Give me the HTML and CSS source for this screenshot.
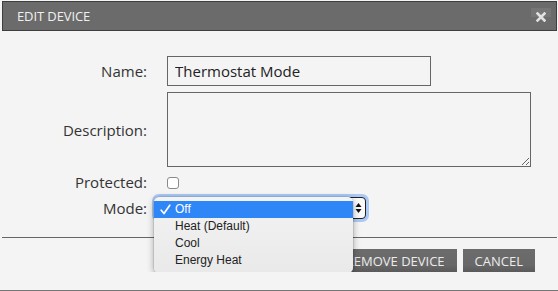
FILE: index.html
```html
<!DOCTYPE html>
<html>
<head>
<meta charset="utf-8">
<link rel="stylesheet" href="styles.css">
</head>
<body>
<div class="dialog">
  <div class="header">
    <span class="title">EDIT DEVICE</span>
    <span class="close">
      <svg width="10" height="10" viewBox="0 0 10 10"><path d="M1.5 1.5 L8.5 8.5 M8.5 1.5 L1.5 8.5" stroke="#e2e2e2" stroke-width="2.6" stroke-linecap="square"/></svg>
    </span>
  </div>
  <div class="form">
    <label class="lbl">Name:</label>
    <input class="text" type="text" value="Thermostat Mode">
    <label class="lbl">Description:</label>
    <textarea class="area"></textarea>
    <label class="lbl">Protected:</label>
    <div class="cell"><span class="check"></span></div>
    <label class="lbl">Mode:</label>
    <div class="cell">
      <div class="select">
        <span class="arrows">
          <svg width="7" height="12" viewBox="0 0 7 12"><path d="M3.5 1 L6.5 5 L0.5 5 Z M3.5 11 L0.5 7 L6.5 7 Z" fill="#111"/></svg>
        </span>
        <div class="menu">
          <div class="opt sel">
            <svg class="tick" width="11" height="11" viewBox="0 0 11 11"><path d="M1.2 6.2 L4 9.5 L9.8 1.2" fill="none" stroke="#fff" stroke-width="1.7" stroke-linecap="round" stroke-linejoin="round"/></svg>Off</div>
          <div class="opt">Heat (Default)</div>
          <div class="opt">Cool</div>
          <div class="opt">Energy Heat</div>
        </div>
      </div>
    </div>
  </div>
  <div class="divider"></div>
  <div class="footer">
    <button class="btn">REMOVE DEVICE</button>
    <button class="btn">CANCEL</button>
  </div>
</div>
<div class="bottomline"></div>
</body>
</html>
```

FILE: styles.css
```css
html, body {
  margin: 0;
  padding: 0;
  background: #f4f4f4;
  font-family: "Open Sans", "DejaVu Sans", sans-serif;
}
.dialog {
  width: 555px;
  margin: 1px 0 0 2px;
}
.header {
  height: 28px;
  background: #6b6b6b;
  border: 1px solid #3e3e3e;
  display: flex;
  align-items: center;
  justify-content: space-between;
  padding-left: 14px;
  padding-right: 5px;
}
.title {
  color: #f0f0f0;
  font-size: 13px;
  letter-spacing: -0.1px;
}
.close {
  width: 20px;
  height: 18px;
  margin-top: 1px;
  background: linear-gradient(#767676 0%, #767676 50%, #6c6c6c 50%, #6c6c6c 100%);
  display: flex;
  align-items: center;
  justify-content: center;
}
.form {
  display: grid;
  grid-template-columns: 145px 1fr;
  grid-template-rows: 30px 75px 18px 22px;
  column-gap: 20px;
  row-gap: 6px;
  padding-top: 25px;
  align-items: center;
}
.lbl {
  text-align: right;
  font-size: 15px;
  color: #333;
}
.text {
  box-sizing: border-box;
  width: 264px;
  height: 30px;
  border: 1px solid #666;
  background: #f4f4f4;
  font-family: inherit;
  font-size: 15px;
  color: #222;
  padding: 0 7px;
  margin: 0;
  outline: none;
}
.area {
  box-sizing: border-box;
  width: 364px;
  height: 75px;
  border: 1px solid #666;
  background: #f4f4f4;
  margin: 0;
  display: block;
  outline: none;
}
.cell {
  display: flex;
  align-items: center;
  height: 100%;
}
.check {
  box-sizing: border-box;
  width: 12px;
  height: 12px;
  border: 1px solid #8a8a8a;
  border-radius: 3px;
  background: #fff;
  margin-top: 1px;
}
.select {
  position: relative;
  box-sizing: border-box;
  width: 211px;
  height: 22px;
  margin-left: -12px;
  border: 1px solid #222;
  border-radius: 4px;
  background: #fafafa;
  box-shadow: 0 0 0 3px rgba(110, 165, 245, 0.55);
  display: flex;
  justify-content: flex-end;
  align-items: center;
  padding-right: 3px;
}
.arrows {
  display: flex;
}
.menu {
  position: absolute;
  left: -2px;
  top: -1px;
  width: 199px;
  box-sizing: border-box;
  padding: 4px 0;
  border-radius: 5px;
  background: linear-gradient(#f3f3f3, #e9e9e9);
  box-shadow: 0 2px 7px rgba(0, 0, 0, 0.35), 0 0 0 0.5px rgba(0, 0, 0, 0.15);
  font-family: "Liberation Sans", Arial, sans-serif;
  font-size: 12px;
  color: #222;
}
.opt {
  height: 17px;
  line-height: 17px;
  padding-left: 21px;
  position: relative;
}
.opt.sel {
  background: #2f86f7;
  color: #fff;
}
.tick {
  position: absolute;
  left: 6px;
  top: 3px;
}
.divider {
  height: 1px;
  background: #666;
  margin-top: 18px;
}
.footer {
  display: flex;
  justify-content: flex-end;
  gap: 6px;
  padding: 11px 22px 0 0;
}
.btn {
  height: 23px;
  border: none;
  padding: 0 12px;
  background: linear-gradient(#6c6c6c 0%, #686868 70%, #5a5a5a 100%);
  color: #ececec;
  font-family: "Open Sans", sans-serif;
  font-size: 13px;
}
.bottomline {
  position: absolute;
  left: 0;
  right: 0;
  top: 290px;
  height: 1px;
  background: #777;
}
```
